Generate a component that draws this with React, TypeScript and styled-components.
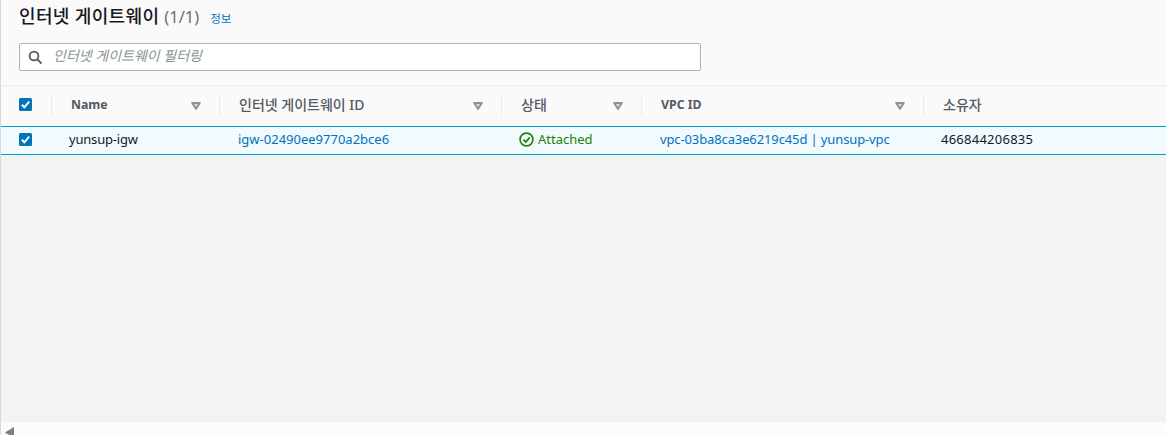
import React from "react";
import styled, { createGlobalStyle } from "styled-components";

const FONT = `"Noto Sans", "Noto Sans CJK KR", sans-serif`;

const Global = createGlobalStyle`
  html, body { margin: 0; padding: 0; }
  body { width: 1166px; height: 435px; overflow: hidden; background: #f2f3f3; font-family: ${FONT}; }
`;

const Page = styled.div`
  width: 1166px;
  height: 435px;
  display: flex;
  flex-direction: column;
  box-sizing: border-box;
  border-left: 1px solid #d5dbdb;
`;

const Panel = styled.section`
  background: #fafafa;
  height: 86px;
  box-sizing: border-box;
  padding: 4px 0 0 18px;
  border-bottom: 1px solid #eaeded;
  flex: none;
`;

const TitleRow = styled.div`
  display: flex;
  align-items: baseline;
  gap: 11px;
  height: 25px;
`;

const Title = styled.h2`
  margin: 0;
  font-size: 18px;
  line-height: 25px;
  font-weight: 500;
  color: #16191f;
  letter-spacing: 0.35px;
`;

const Count = styled.span`
  font-size: 16.5px;
  font-weight: 400;
  color: #687078;
  letter-spacing: 0;
`;

const Info = styled.a`
  font-size: 11.5px;
  color: #0073bb;
`;

const Filter = styled.div`
  margin-top: 14px;
  width: 682px;
  height: 28px;
  box-sizing: border-box;
  background: #fff;
  border: 1px solid #aab7b8;
  border-radius: 2px;
  display: flex;
  align-items: center;
  padding-left: 8px;
  gap: 10px;
`;

const Placeholder = styled.span`
  font-size: 14px;
  font-style: italic;
  color: #879596;
  position: relative;
  top: -2px;
`;

const Head = styled.div`
  display: grid;
  grid-template-columns: 50px 168px 282px 140px 282px 1fr;
  height: 40px;
  background: #fafafa;
  flex: none;
  align-items: center;
`;

const HeadCell = styled.div<{ $divider?: boolean }>`
  height: 20px;
  display: flex;
  align-items: center;
  justify-content: space-between;
  box-sizing: border-box;
  padding: 0 18px 0 19px;
  color: #545b64;
  border-left: ${(p) => (p.$divider ? "1px solid #eaeded" : "none")};
`;

const HeadLabel = styled.span<{ $korean?: boolean }>`
  font-size: ${(p) => (p.$korean ? "14px" : "12.3px")};
  font-weight: ${(p) => (p.$korean ? 500 : 700)};
  line-height: 18px;
  position: relative;
  top: -1px;
`;

const CheckCell = styled.div<{ $lift: number }>`
  display: flex;
  align-items: center;
  padding: 0 0 ${(p) => p.$lift}px 18px;
`;

const Row = styled.div`
  display: grid;
  grid-template-columns: 50px 168px 282px 140px 282px 1fr;
  height: 29px;
  box-sizing: border-box;
  align-items: center;
  background: #f1faff;
  border-top: 1px solid #00a1c9;
  border-bottom: 1px solid #00a1c9;
  flex: none;
  font-size: 13px;
  color: #16191f;
`;

const Cell = styled.div<{ $pad?: number; $track?: number; $lift?: number }>`
  padding: 0 0 ${(p) => p.$lift ?? 4}px ${(p) => p.$pad ?? 19}px;
  white-space: nowrap;
  letter-spacing: ${(p) => p.$track ?? 0}px;
`;

const Link = styled.a`
  color: #0073bb;
`;

const Status = styled.span`
  display: inline-flex;
  align-items: center;
  gap: 4px;
  color: #1d8102;
`;

const Fill = styled.div`
  flex: 1;
  background: #f2f3f3;
`;

const ScrollBar = styled.div`
  height: 13px;
  flex: none;
  background: #fcfcfc;
  display: flex;
  align-items: flex-start;
  padding: 5px 0 0 4px;
  box-sizing: border-box;
  overflow: hidden;
`;

const Box = () => (
  <svg width="13" height="13" viewBox="0 0 13 13">
    <rect width="13" height="13" rx="1.5" fill="#0073bb" />
    <path d="M2.8 6.8 5.3 9.3 10.2 3.6" fill="none" stroke="#fff" strokeWidth="2" />
  </svg>
);

const Caret = () => (
  <svg width="10" height="8" viewBox="0 0 10 8">
    <path d="M1.2 1h7.6L5 7z" fill="#d5dbdb" stroke="#879596" strokeWidth="1.9" strokeLinejoin="round" />
  </svg>
);

const Search = () => (
  <svg width="15" height="15" viewBox="0 0 15 15">
    <circle cx="6" cy="6" r="4.4" fill="none" stroke="#545b64" strokeWidth="1.8" />
    <path d="M9.4 9.4 13.6 13.6" stroke="#545b64" strokeWidth="2" />
  </svg>
);

const Ok = () => (
  <svg width="15" height="15" viewBox="0 0 15 15">
    <circle cx="7.5" cy="7.5" r="6.4" fill="none" stroke="#1d8102" strokeWidth="1.7" />
    <path d="M4.4 7.6 6.8 10 10.8 5.4" fill="none" stroke="#1d8102" strokeWidth="1.7" />
  </svg>
);

export default function App() {
  return (
    <>
      <Global />
      <Page>
        <Panel>
          <TitleRow>
            <Title>
              인터넷 게이트웨이 <Count>(1/1)</Count>
            </Title>
            <Info>정보</Info>
          </TitleRow>
          <Filter>
            <Search />
            <Placeholder>인터넷 게이트웨이 필터링</Placeholder>
          </Filter>
        </Panel>
        <Head>
          <CheckCell $lift={4}><Box /></CheckCell>
          <HeadCell $divider><HeadLabel>Name</HeadLabel><Caret /></HeadCell>
          <HeadCell $divider><HeadLabel $korean>인터넷 게이트웨이 ID</HeadLabel><Caret /></HeadCell>
          <HeadCell $divider><HeadLabel $korean>상태</HeadLabel><Caret /></HeadCell>
          <HeadCell $divider><HeadLabel>VPC ID</HeadLabel><Caret /></HeadCell>
          <HeadCell $divider><HeadLabel $korean>소유자</HeadLabel></HeadCell>
        </Head>
        <Row>
          <CheckCell $lift={2}><Box /></CheckCell>
          <Cell $pad={18} $track={-0.2}>yunsup-igw</Cell>
          <Cell><Link>igw-02490ee9770a2bce6</Link></Cell>
          <Cell $pad={18} $lift={0}><Status><Ok />Attached</Status></Cell>
          <Cell $track={-0.12}><Link>vpc-03ba8ca3e6219c45d | yunsup-vpc</Link></Cell>
          <Cell $pad={18} $track={0.25}>466844206835</Cell>
        </Row>
        <Fill />
        <ScrollBar>
          <svg width="9" height="11" viewBox="0 0 9 11"><path d="M9 0v11L0 5.5z" fill="#808080" /></svg>
        </ScrollBar>
      </Page>
    </>
  );
}
